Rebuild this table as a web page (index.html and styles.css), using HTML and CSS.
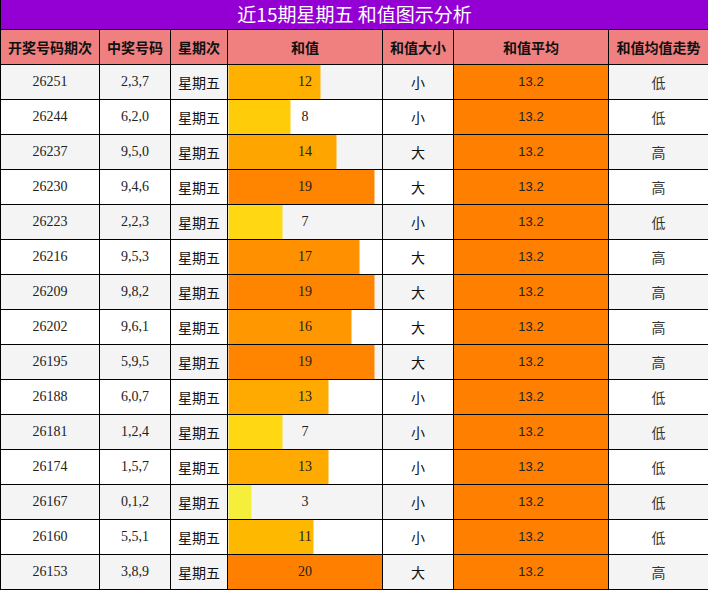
FILE: index.html
```html
<!DOCTYPE html>
<html lang="zh">
<head>
<meta charset="utf-8">
<title>近15期星期五 和值图示分析</title>
<link rel="stylesheet" href="styles.css">
</head>
<body>
<table class="chart">
  <colgroup>
    <col class="c-issue"><col class="c-num"><col class="c-week"><col class="c-sum"><col class="c-size"><col class="c-avg"><col class="c-trend">
  </colgroup>
  <thead>
    <tr class="title-row"><th colspan="7" class="title">近15期星期五 和值图示分析</th></tr>
    <tr class="head-row">
      <th>开奖号码期次</th><th>中奖号码</th><th>星期次</th><th>和值</th><th>和值大小</th><th>和值平均</th><th>和值均值走势</th>
    </tr>
  </thead>
  <tbody>
    <tr class="odd"><td class="num">26251</td><td class="num">2,3,7</td><td class="cjk">星期五</td><td class="num sum" style="background:linear-gradient(to right,#ffb000 60%,transparent 60%)">12</td><td class="cjk">小</td><td class="avg">13.2</td><td class="cjk trend">低</td></tr>
    <tr><td class="num">26244</td><td class="num">6,2,0</td><td class="cjk">星期五</td><td class="num sum" style="background:linear-gradient(to right,#ffcc0a 40%,transparent 40%)">8</td><td class="cjk">小</td><td class="avg">13.2</td><td class="cjk trend">低</td></tr>
    <tr class="odd"><td class="num">26237</td><td class="num">9,5,0</td><td class="cjk">星期五</td><td class="num sum" style="background:linear-gradient(to right,#ffa500 70%,transparent 70%)">14</td><td class="cjk">大</td><td class="avg">13.2</td><td class="cjk trend">高</td></tr>
    <tr><td class="num">26230</td><td class="num">9,4,6</td><td class="cjk">星期五</td><td class="num sum" style="background:linear-gradient(to right,#ff8500 95%,transparent 95%)">19</td><td class="cjk">大</td><td class="avg">13.2</td><td class="cjk trend">高</td></tr>
    <tr class="odd"><td class="num">26223</td><td class="num">2,2,3</td><td class="cjk">星期五</td><td class="num sum" style="background:linear-gradient(to right,#ffd712 35%,transparent 35%)">7</td><td class="cjk">小</td><td class="avg">13.2</td><td class="cjk trend">低</td></tr>
    <tr><td class="num">26216</td><td class="num">9,5,3</td><td class="cjk">星期五</td><td class="num sum" style="background:linear-gradient(to right,#ff9100 85%,transparent 85%)">17</td><td class="cjk">大</td><td class="avg">13.2</td><td class="cjk trend">高</td></tr>
    <tr class="odd"><td class="num">26209</td><td class="num">9,8,2</td><td class="cjk">星期五</td><td class="num sum" style="background:linear-gradient(to right,#ff8500 95%,transparent 95%)">19</td><td class="cjk">大</td><td class="avg">13.2</td><td class="cjk trend">高</td></tr>
    <tr><td class="num">26202</td><td class="num">9,6,1</td><td class="cjk">星期五</td><td class="num sum" style="background:linear-gradient(to right,#ff9800 80%,transparent 80%)">16</td><td class="cjk">大</td><td class="avg">13.2</td><td class="cjk trend">高</td></tr>
    <tr class="odd"><td class="num">26195</td><td class="num">5,9,5</td><td class="cjk">星期五</td><td class="num sum" style="background:linear-gradient(to right,#ff8500 95%,transparent 95%)">19</td><td class="cjk">大</td><td class="avg">13.2</td><td class="cjk trend">高</td></tr>
    <tr><td class="num">26188</td><td class="num">6,0,7</td><td class="cjk">星期五</td><td class="num sum" style="background:linear-gradient(to right,#ffaa00 65%,transparent 65%)">13</td><td class="cjk">小</td><td class="avg">13.2</td><td class="cjk trend">低</td></tr>
    <tr class="odd"><td class="num">26181</td><td class="num">1,2,4</td><td class="cjk">星期五</td><td class="num sum" style="background:linear-gradient(to right,#ffd712 35%,transparent 35%)">7</td><td class="cjk">小</td><td class="avg">13.2</td><td class="cjk trend">低</td></tr>
    <tr><td class="num">26174</td><td class="num">1,5,7</td><td class="cjk">星期五</td><td class="num sum" style="background:linear-gradient(to right,#ffaa00 65%,transparent 65%)">13</td><td class="cjk">小</td><td class="avg">13.2</td><td class="cjk trend">低</td></tr>
    <tr class="odd"><td class="num">26167</td><td class="num">0,1,2</td><td class="cjk">星期五</td><td class="num sum" style="background:linear-gradient(to right,#f5ef3c 15%,transparent 15%)">3</td><td class="cjk">小</td><td class="avg">13.2</td><td class="cjk trend">低</td></tr>
    <tr><td class="num">26160</td><td class="num">5,5,1</td><td class="cjk">星期五</td><td class="num sum" style="background:linear-gradient(to right,#ffb800 55%,transparent 55%)">11</td><td class="cjk">小</td><td class="avg">13.2</td><td class="cjk trend">低</td></tr>
    <tr class="odd"><td class="num">26153</td><td class="num">3,8,9</td><td class="cjk">星期五</td><td class="num sum" style="background:linear-gradient(to right,#ff8000 100%,transparent 100%)">20</td><td class="cjk">大</td><td class="avg">13.2</td><td class="cjk trend">高</td></tr>
  </tbody>
</table>
</body>
</html>
```
FILE: styles.css
```css
html, body {
  margin: 0;
  padding: 0;
  background: #ffffff;
}

.chart {
  width: 708px;
  border-collapse: collapse;
  table-layout: fixed;
  font-family: "Liberation Serif", "Noto Sans CJK SC", serif;
  font-size: 14px;
  color: #222;
}

.c-issue { width: 99px; }
.c-num { width: 71px; }
.c-week { width: 57px; }
.c-sum { width: 155px; }
.c-size { width: 71px; }
.c-avg { width: 155px; }
.c-trend { width: 100px; }

.chart th,
.chart td {
  border: 1px solid #000;
  padding: 0;
  text-align: center;
  vertical-align: middle;
}

.title-row { height: 29px; }

.chart th.title {
  border-top: 0;
  background: #9400d3;
  color: #fff;
  font-family: "Noto Sans CJK SC", sans-serif;
  font-size: 19px;
  font-weight: normal;
  line-height: 26px;
}

.head-row { height: 35px; }

.head-row th {
  background: #f08080;
  color: #111;
  font-family: "Noto Sans CJK SC", sans-serif;
  font-size: 14px;
  font-weight: bold;
}

.chart tbody tr { height: 35px; background: #fff; }
.chart tbody tr.odd { background: #f4f4f4; }

.cjk {
  font-family: "Noto Sans CJK SC", sans-serif;
  color: #111;
}

.trend { color: #333; }

.avg {
  background: #ff8000;
  font-family: "Liberation Sans", "Noto Sans CJK SC", sans-serif;
  font-size: 13px;
  color: #222;
}
```
